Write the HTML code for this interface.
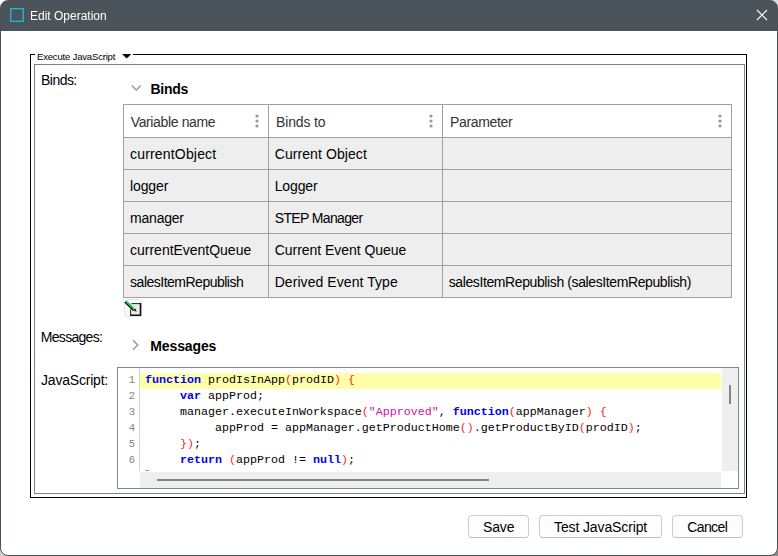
<!DOCTYPE html>
<html>
<head>
<meta charset="utf-8">
<title>Edit Operation</title>
<style>
html,body{margin:0;padding:0;}
body{width:778px;height:556px;overflow:hidden;background:#e9e9e9;font-family:"Liberation Sans",sans-serif;position:relative;}
.abs{position:absolute;}
.t{position:absolute;white-space:nowrap;line-height:1;transform-origin:0 0;}
#win{position:absolute;left:0;top:0;width:776px;height:554px;border:1px solid #4a545a;border-radius:8px;background:linear-gradient(#4a545a 0,#4a545a 30px,#fff 30px,#fff 100%);overflow:hidden;}
#titlebar{position:absolute;left:0;top:0;width:778px;height:31px;background:#4a545a;}
/* all coordinates below are page coordinates; #page is offset to compensate win border */
#page{position:absolute;left:-1px;top:-1px;width:778px;height:556px;}
.cell{position:absolute;background:#eeeeee;}
.hl{position:absolute;background:#a0a0a0;}
.lbl{font-size:14px;color:#000;}
.ct{font-size:14px;color:#000;}
.hd{font-size:14px;color:#333;}
.code{font-family:"Liberation Mono",monospace;font-size:11.667px;color:#000;position:absolute;white-space:pre;line-height:16px;height:16px;}
.kw{color:#0000f0;font-weight:bold;}
.br{color:#ff2525;}
.str{color:#cf0fa4;}
.ln{font-family:"Liberation Mono",monospace;font-size:10.6px;color:#858585;position:absolute;line-height:16px;width:12px;text-align:right;}
.btn{position:absolute;box-sizing:border-box;border:1px solid #cdcdcd;border-bottom-color:#c0c0c0;border-radius:4px;background:#fdfdfd;height:23px;top:515px;}
</style>
</head>
<body>
<div class="abs" style="left:0;top:0;width:10px;height:10px;background:#fafafa;"></div><div class="abs" style="right:0;top:0;width:10px;height:10px;background:#dcdcdc;"></div><div class="abs" style="left:0;bottom:0;width:10px;height:10px;background:#cfcfcf;"></div><div class="abs" style="right:0;bottom:0;width:10px;height:10px;background:#8a8a8a;"></div>
<div id="win"><div id="page">
<div id="titlebar"></div>

<!-- title icon -->
<svg class="abs" style="left:10px;top:8px" width="14" height="14" viewBox="0 0 14 14"><rect x="0.7" y="0.7" width="12.6" height="12.6" fill="none" stroke="#1fb4cf" stroke-width="1.4"/></svg>
<div class="t" id="tt" style="left:30.00px;top:10px;font-size:12px;color:#fff;letter-spacing:0.000px;will-change:transform;">Edit Operation</div>
<svg class="abs" style="left:756px;top:9px" width="12" height="12" viewBox="0 0 12 12"><path d="M1 1 L11 11 M11 1 L1 11" stroke="#fff" stroke-width="1.1" fill="none"/></svg>

<!-- fieldset borders -->
<div class="abs" style="left:30px;top:54px;width:715px;height:442px;border:1px solid #000;"></div>
<div class="abs" style="left:35px;top:50px;width:98px;height:12px;background:#fff;"></div>
<div class="abs" style="left:34px;top:64px;width:709px;height:428px;border:1px solid #7d838b;"></div>
<div class="t" id="lg" style="left:37.00px;top:51.8px;font-size:9.6px;color:#000;letter-spacing:-0.220px;">Execute JavaScript</div>
<svg class="abs" style="left:122px;top:54px" width="10" height="5" viewBox="0 0 10 5"><path d="M0 0 L9.4 0 L4.7 4.6 Z" fill="#000"/></svg>

<!-- labels -->
<div class="t lbl" id="l1" style="left:41.00px;top:73px;letter-spacing:-0.530px;">Binds:</div>
<div class="t lbl" id="l2" style="left:40.80px;top:330px;letter-spacing:-0.700px;">Messages:</div>
<div class="t lbl" id="l3" style="left:41.00px;top:373px;letter-spacing:-0.200px;">JavaScript:</div>

<!-- Binds header -->
<svg class="abs" style="left:130px;top:84px" width="13" height="9" viewBox="0 0 13 9"><path d="M1.8 1.4 L6.3 5.9 L10.8 1.4" stroke="#999" stroke-width="1.4" fill="none"/></svg>
<div class="t" id="b1" style="left:150.60px;top:82px;font-size:14px;font-weight:bold;color:#000;letter-spacing:-0.330px;">Binds</div>

<!-- table -->
<div class="abs" style="left:123px;top:104px;width:609px;height:194px;background:#a0a0a0;"></div>
<div class="abs" style="left:124px;top:105px;width:144px;height:32px;background:#fff;"></div>
<div class="abs" style="left:269px;top:105px;width:173px;height:32px;background:#fff;"></div>
<div class="abs" style="left:443px;top:105px;width:288px;height:32px;background:#fff;"></div>
<!-- rows -->
<div class="cell" style="left:124px;top:138px;width:144px;height:31px;"></div>
<div class="cell" style="left:269px;top:138px;width:173px;height:31px;"></div>
<div class="cell" style="left:443px;top:138px;width:288px;height:31px;"></div>
<div class="cell" style="left:124px;top:170px;width:144px;height:31px;"></div>
<div class="cell" style="left:269px;top:170px;width:173px;height:31px;"></div>
<div class="cell" style="left:443px;top:170px;width:288px;height:31px;"></div>
<div class="cell" style="left:124px;top:202px;width:144px;height:31px;"></div>
<div class="cell" style="left:269px;top:202px;width:173px;height:31px;"></div>
<div class="cell" style="left:443px;top:202px;width:288px;height:31px;"></div>
<div class="cell" style="left:124px;top:234px;width:144px;height:31px;"></div>
<div class="cell" style="left:269px;top:234px;width:173px;height:31px;"></div>
<div class="cell" style="left:443px;top:234px;width:288px;height:31px;"></div>
<div class="cell" style="left:124px;top:266px;width:144px;height:31px;"></div>
<div class="cell" style="left:269px;top:266px;width:173px;height:31px;"></div>
<div class="cell" style="left:443px;top:266px;width:288px;height:31px;"></div>

<!-- header text -->
<div class="t hd" id="h1" style="left:130.70px;top:115px;letter-spacing:-0.360px;">Variable name</div>
<div class="t hd" id="h2" style="left:276.00px;top:115px;letter-spacing:-0.140px;">Binds to</div>
<div class="t hd" id="h3" style="left:450.00px;top:115px;letter-spacing:-0.338px;">Parameter</div>
<!-- dots -->
<svg class="abs" style="left:255px;top:114px" width="4" height="15" viewBox="0 0 4 15"><circle cx="2" cy="2" r="1.6" fill="#989898"/><circle cx="2" cy="7" r="1.6" fill="#989898"/><circle cx="2" cy="12" r="1.6" fill="#989898"/></svg>
<svg class="abs" style="left:429px;top:114px" width="4" height="15" viewBox="0 0 4 15"><circle cx="2" cy="2" r="1.6" fill="#989898"/><circle cx="2" cy="7" r="1.6" fill="#989898"/><circle cx="2" cy="12" r="1.6" fill="#989898"/></svg>
<svg class="abs" style="left:718px;top:114px" width="4" height="15" viewBox="0 0 4 15"><circle cx="2" cy="2" r="1.6" fill="#989898"/><circle cx="2" cy="7" r="1.6" fill="#989898"/><circle cx="2" cy="12" r="1.6" fill="#989898"/></svg>

<!-- cell text -->
<div class="t ct" id="c11" style="left:130.00px;top:147px;letter-spacing:0.180px;">currentObject</div>
<div class="t ct" id="c12" style="left:274.70px;top:147px;letter-spacing:0.084px;">Current Object</div>
<div class="t ct" id="c21" style="left:130.00px;top:179px;letter-spacing:-0.120px;">logger</div>
<div class="t ct" id="c22" style="left:274.70px;top:179px;letter-spacing:-0.140px;">Logger</div>
<div class="t ct" id="c31" style="left:130.10px;top:211px;letter-spacing:-0.230px;">manager</div>
<div class="t ct" id="c32" style="left:274.70px;top:211px;letter-spacing:-0.637px;">STEP Manager</div>
<div class="t ct" id="c41" style="left:130.10px;top:243px;letter-spacing:-0.020px;">currentEventQueue</div>
<div class="t ct" id="c42" style="left:274.70px;top:243px;letter-spacing:-0.039px;">Current Event Queue</div>
<div class="t ct" id="c51" style="left:130.10px;top:275px;letter-spacing:-0.500px;">salesItemRepublish</div>
<div class="t ct" id="c52" style="left:274.70px;top:275px;letter-spacing:0.065px;">Derived Event Type</div>
<div class="t ct" id="c53" style="left:448.70px;top:275px;letter-spacing:-0.393px;">salesItemRepublish (salesItemRepublish)</div>

<!-- edit icon -->
<svg class="abs" style="left:124px;top:299px" width="19" height="19" viewBox="0 0 19 19">
<rect x="0.6" y="0.5" width="17" height="17" rx="3" fill="#fbfbfb" stroke="#e2e2e2" stroke-width="1"/>
<rect x="6.6" y="4.6" width="10" height="12" fill="#ececec"/>
<path d="M6.6 10.5 V16.4 M7.5 4.6 H17" stroke="#222" stroke-width="1" fill="none"/>
<path d="M16.5 4.1 V16.3 H6.1" stroke="#111" stroke-width="1.6" fill="none"/>
<path d="M0.9 3.0 L9.6 11.3" stroke="#000" stroke-width="1.7" fill="none"/>
<path d="M2.1 2.2 L10.3 10.0" stroke="#0cc24a" stroke-width="2.0" fill="none"/>
<path d="M2.5 1.9 L10.7 9.7" stroke="#8aeaa8" stroke-width="0.6" fill="none"/>
<path d="M9.2 11.0 L11.2 9.3 L12.7 12.9 Z" fill="#111"/>
<path d="M9.5 10.3 L10.7 9.2" stroke="#f4f4f4" stroke-width="0.9"/>
</svg>

<!-- Messages header -->
<svg class="abs" style="left:131.1px;top:339px" width="9" height="12" viewBox="0 0 9 12"><path d="M2 1.2 L6.8 6 L2 10.8" stroke="#999" stroke-width="1.5" fill="none"/></svg>
<div class="t" id="b2" style="left:150.30px;top:339px;font-size:14px;font-weight:bold;color:#000;letter-spacing:-0.120px;">Messages</div>

<!-- editor -->
<div class="abs" style="left:117px;top:367px;width:620px;height:120px;border:1px solid #80868e;background:#fff;"></div>
<div class="abs" style="left:139px;top:368px;width:1px;height:103px;background:#d4d4d4;"></div>
<div class="abs" style="left:140px;top:373px;width:581px;height:16px;background:#ffffaa;"></div>
<div class="abs" style="left:722px;top:368px;width:16px;height:103px;background:#efefef;"></div>
<div class="abs" style="left:140px;top:472px;width:581px;height:16px;background:#efefef;"></div>
<div class="abs" style="left:729px;top:385px;width:2px;height:18.5px;background:#868686;"></div>
<div class="abs" style="left:157px;top:479px;width:332px;height:2px;background:#848484;"></div>

<div class="ln" style="left:123px;top:372px;">1</div>
<div class="ln" style="left:123px;top:388px;">2</div>
<div class="ln" style="left:123px;top:404px;">3</div>
<div class="ln" style="left:123px;top:420px;">4</div>
<div class="ln" style="left:123px;top:436px;">5</div>
<div class="ln" style="left:123px;top:452px;">6</div>

<div class="code" style="left:145px;top:372px;"><span class="kw">function</span> prodIsInApp<span class="br">(</span>prodID<span class="br">)</span> <span class="br">{</span></div>
<div class="code" style="left:145px;top:388px;">     <span class="kw">var</span> appProd;</div>
<div class="code" style="left:145px;top:404px;">     manager.executeInWorkspace<span class="br">(</span><span class="str">"Approved"</span>, <span class="kw">function</span><span class="br">(</span>appManager<span class="br">)</span> <span class="br">{</span></div>
<div class="code" style="left:145px;top:420px;">          appProd = appManager.getProductHome<span class="br">()</span>.getProductByID<span class="br">(</span>prodID<span class="br">)</span>;</div>
<div class="code" style="left:145px;top:436px;">     <span class="br">})</span>;</div>
<div class="code" style="left:145px;top:452px;">     <span class="kw">return</span> <span class="br">(</span>appProd != <span class="kw">null</span><span class="br">)</span>;</div>
<div class="abs" style="left:140px;top:467px;width:581px;height:4px;overflow:hidden;"><div class="code" style="left:5px;top:0px;"><span class="br">}</span></div></div>

<!-- buttons -->
<div class="btn" style="left:468px;width:61px;"></div>
<div class="btn" style="left:539px;width:123px;"></div>
<div class="btn" style="left:672px;width:71px;"></div>
<div class="t ct" id="bt1" style="left:483.00px;top:520px;letter-spacing:-0.150px;">Save</div>
<div class="t ct" id="bt2" style="left:554.00px;top:520px;letter-spacing:-0.120px;">Test JavaScript</div>
<div class="t ct" id="bt3" style="left:687.20px;top:520px;letter-spacing:-0.600px;">Cancel</div>

</div></div>
</body>
</html>
